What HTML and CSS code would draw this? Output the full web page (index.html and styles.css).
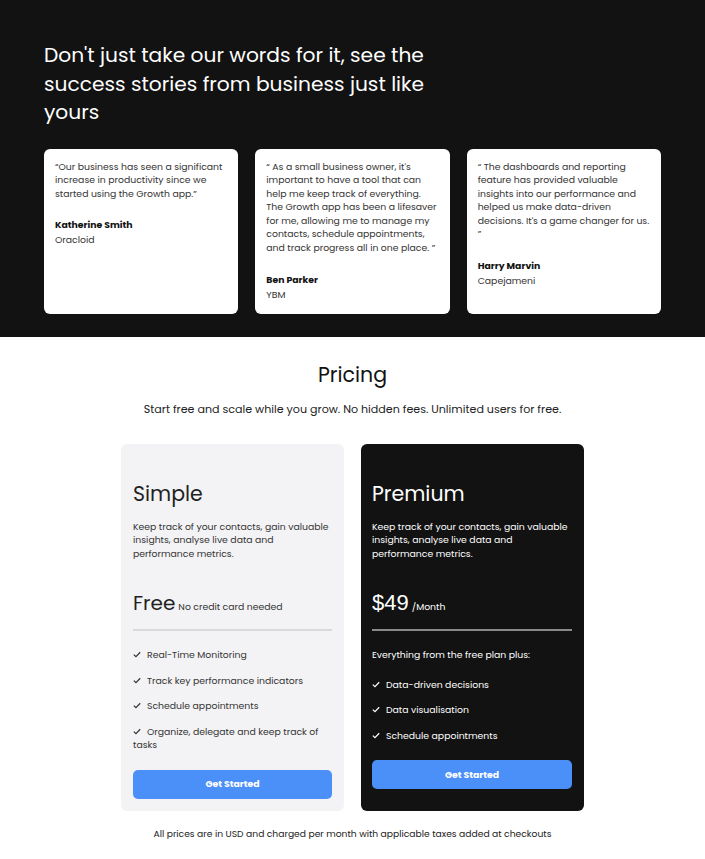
FILE: index.html
```html
<!DOCTYPE html>
<html>
<head>
<meta charset="utf-8">
<link rel="stylesheet" href="styles.css">
</head>
<body>
<section class="stories">
  <h2 class="stories-title">Don't just take our words for it, see the success stories from business just like yours</h2>
  <div class="quotes">
    <div class="quote-card">
      <p class="quote">“Our business has seen a significant increase in productivity since we started using the Growth app.”</p>
      <p class="author">Katherine Smith</p>
      <p class="company">Oracloid</p>
    </div>
    <div class="quote-card">
      <p class="quote">“ As a small business owner, it's important to have a tool that can help me keep track of everything. The Growth app has been a lifesaver for me, allowing me to manage my contacts, schedule appointments, and track progress all in one place. ”</p>
      <p class="author">Ben Parker</p>
      <p class="company">YBM</p>
    </div>
    <div class="quote-card">
      <p class="quote">“ The dashboards and reporting feature has provided valuable insights into our performance and helped us make data-driven decisions. It's a game changer for us. ”</p>
      <p class="author">Harry Marvin</p>
      <p class="company">Capejameni</p>
    </div>
  </div>
</section>

<section class="pricing">
  <h2 class="pricing-title">Pricing</h2>
  <p class="pricing-sub">Start free and scale while you grow. No hidden fees. Unlimited users for free.</p>
  <div class="plans">
    <div class="plan plan-light">
      <h3 class="plan-name">Simple</h3>
      <p class="plan-desc">Keep track of your contacts, gain valuable insights, analyse live data and performance metrics.</p>
      <div class="plan-price"><span class="price-big">Free</span> <span class="price-small">No credit card needed</span></div>
      <hr class="plan-rule">
      <ul class="features">
        <li><svg class="check" viewBox="0 0 10 8"><path d="M1 4.2 L3.7 6.7 L9 1.2"/></svg>Real-Time Monitoring</li>
        <li><svg class="check" viewBox="0 0 10 8"><path d="M1 4.2 L3.7 6.7 L9 1.2"/></svg>Track key performance indicators</li>
        <li><svg class="check" viewBox="0 0 10 8"><path d="M1 4.2 L3.7 6.7 L9 1.2"/></svg>Schedule appointments</li>
        <li><svg class="check" viewBox="0 0 10 8"><path d="M1 4.2 L3.7 6.7 L9 1.2"/></svg>Organize, delegate and keep track of tasks</li>
      </ul>
      <button class="cta">Get Started</button>
    </div>
    <div class="plan plan-dark">
      <h3 class="plan-name">Premium</h3>
      <p class="plan-desc">Keep track of your contacts, gain valuable insights, analyse live data and performance metrics.</p>
      <div class="plan-price"><span class="price-big price-num">$49</span> <span class="price-small">/Month</span></div>
      <hr class="plan-rule">
      <p class="plan-intro">Everything from the free plan plus:</p>
      <ul class="features">
        <li><svg class="check" viewBox="0 0 10 8"><path d="M1 4.2 L3.7 6.7 L9 1.2"/></svg>Data-driven decisions</li>
        <li><svg class="check" viewBox="0 0 10 8"><path d="M1 4.2 L3.7 6.7 L9 1.2"/></svg>Data visualisation</li>
        <li><svg class="check" viewBox="0 0 10 8"><path d="M1 4.2 L3.7 6.7 L9 1.2"/></svg>Schedule appointments</li>
      </ul>
      <button class="cta">Get Started</button>
    </div>
  </div>
  <p class="footnote">All prices are in USD and charged per month with applicable taxes added at checkouts</p>
</section>
</body>
</html>
```

FILE: styles.css
```css
* { box-sizing: border-box; }
body {
  margin: 0;
  font-family: Poppins, "Open Sans", sans-serif;
  color: #222;
  background: #fff;
}
p, h2, h3, ul { margin: 0; padding: 0; }

.stories {
  background: #121212;
  padding: 41px 44px 23px;
}
.stories-title {
  color: #fff;
  font-weight: 400;
  font-size: 20.2px;
  line-height: 28.5px;
  max-width: 400px;
}
.quotes {
  margin-top: 22px;
  display: grid;
  grid-template-columns: repeat(3, 1fr);
  gap: 17px;
}
.quote-card {
  background: #fff;
  border-radius: 6px;
  padding: 11px 10px 12px 11px;
  font-size: 9.3px;
  line-height: 13.6px;
}
.quote { color: #333; }
.author {
  margin-top: 17px;
  font-weight: 700;
  color: #111;
  line-height: 15px;
}
.company { color: #333; line-height: 15px; }

.pricing {
  padding: 23px 0 14px;
  text-align: center;
}
.pricing-title {
  font-weight: 400;
  font-size: 20.5px;
  line-height: 30px;
  color: #111;
}
.pricing-sub {
  margin-top: 11px;
  font-size: 11.1px;
  line-height: 16px;
  color: #222;
}
.plans {
  margin-top: 27px;
  display: flex;
  justify-content: center;
  gap: 17px;
  text-align: left;
}
.plan {
  width: 223px;
  border-radius: 6px;
  padding: 36px 12px 12px;
}
.plan-light { background: #f3f3f5; color: #333; }
.plan-dark { background: #121212; color: #fff; padding-left: 11px; }
.plan-name {
  font-weight: 400;
  font-size: 20.5px;
  line-height: 28px;
}
.plan-light .plan-name { color: #222; }
.plan-desc {
  margin-top: 12px;
  font-size: 9.3px;
  line-height: 13.6px;
}
.plan-price {
  margin-top: 30px;
  display: flex;
  align-items: baseline;
  gap: 3px;
}
.price-big {
  font-size: 20px;
  line-height: 26px;
}
.plan-light .price-big { color: #222; }
.price-num {
  font-family: "Liberation Sans", Arial, sans-serif;
  font-size: 22px;
}
.price-small { font-size: 9.3px; }
.plan-rule {
  margin: 13px 0 0;
  border: 0;
  height: 2px;
}
.plan-light .plan-rule { background: #d9d9db; }
.plan-dark .plan-rule { background: #8a8a8a; }
.plan-intro {
  margin-top: 17px;
  font-size: 9.3px;
  line-height: 13.6px;
}
.features {
  list-style: none;
  margin-top: 17px;
  font-size: 9.3px;
  line-height: 13.6px;
}
.plan-dark .features { margin-top: 16px; }
.features li { margin-bottom: 11.8px; }
.check {
  width: 8px;
  height: 7px;
  margin-right: 6px;
  fill: none;
  stroke: currentColor;
  stroke-width: 1.5;
  vertical-align: 0;
}
.cta {
  display: block;
  width: 100%;
  height: 29px;
  margin-top: 18px;
  border: 0;
  border-radius: 5px;
  background: #4b8ff8;
  color: #fff;
  font-family: inherit;
  font-weight: 700;
  font-size: 9.3px;
}
.footnote {
  margin-top: 16px;
  font-size: 9.2px;
  line-height: 14px;
  color: #222;
}
```
